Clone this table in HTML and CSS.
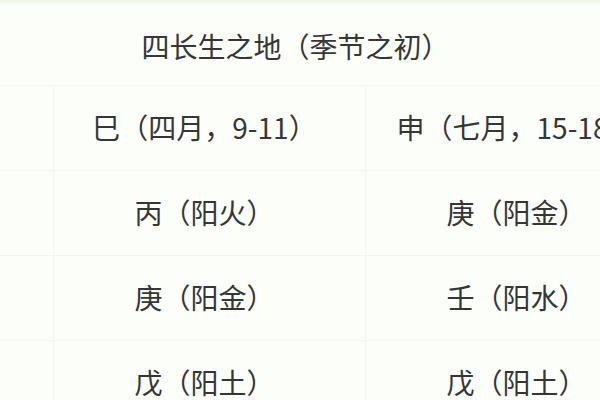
FILE: index.html
```html
<!DOCTYPE html>
<html lang="zh">
<head>
<meta charset="utf-8">
<link rel="stylesheet" href="styles.css">
</head>
<body>
<div class="frame">
<table class="grid">
  <colgroup>
    <col class="c-label">
    <col class="c-data">
    <col class="c-data">
  </colgroup>
  <tr class="row head">
    <th colspan="3">四长生之地（季节之初）</th>
  </tr>
  <tr class="row">
    <td></td>
    <td>巳（四月，9-11）</td>
    <td>申（七月，15-18）</td>
  </tr>
  <tr class="row">
    <td></td>
    <td>丙（阳火）</td>
    <td>庚（阳金）</td>
  </tr>
  <tr class="row">
    <td></td>
    <td>庚（阳金）</td>
    <td>壬（阳水）</td>
  </tr>
  <tr class="row">
    <td></td>
    <td>戊（阳土）</td>
    <td>戊（阳土）</td>
  </tr>
</table>
</div>
</body>
</html>
```

FILE: styles.css
```css
html, body {
  margin: 0;
  padding: 0;
  background: #fcfefa;
}
.frame {
  width: 600px;
  height: 400px;
  overflow: hidden;
  border-top: 3px solid #eef9e9;
  box-sizing: border-box;
}
.grid {
  border-collapse: collapse;
  table-layout: fixed;
  width: 754px;
  margin-left: -77px;
  font-family: "Noto Sans CJK SC", "Noto Sans", sans-serif;
  color: #363636;
  font-size: 28px;
  text-spacing-trim: space-all;
  font-feature-settings: "halt" 0, "chws" 0;
}
.c-label { width: 130px; }
.c-data { width: 312px; }
.row { height: 85px; }
.head { height: 82px; }
.grid th, .grid td {
  border: 1px solid #eef8ec;
  text-align: center;
  font-weight: normal;
  padding: 0 10px 0 0;
  white-space: nowrap;
  line-height: 1.2;
}
.grid th { border-top: none; padding-top: 6px; }
```
